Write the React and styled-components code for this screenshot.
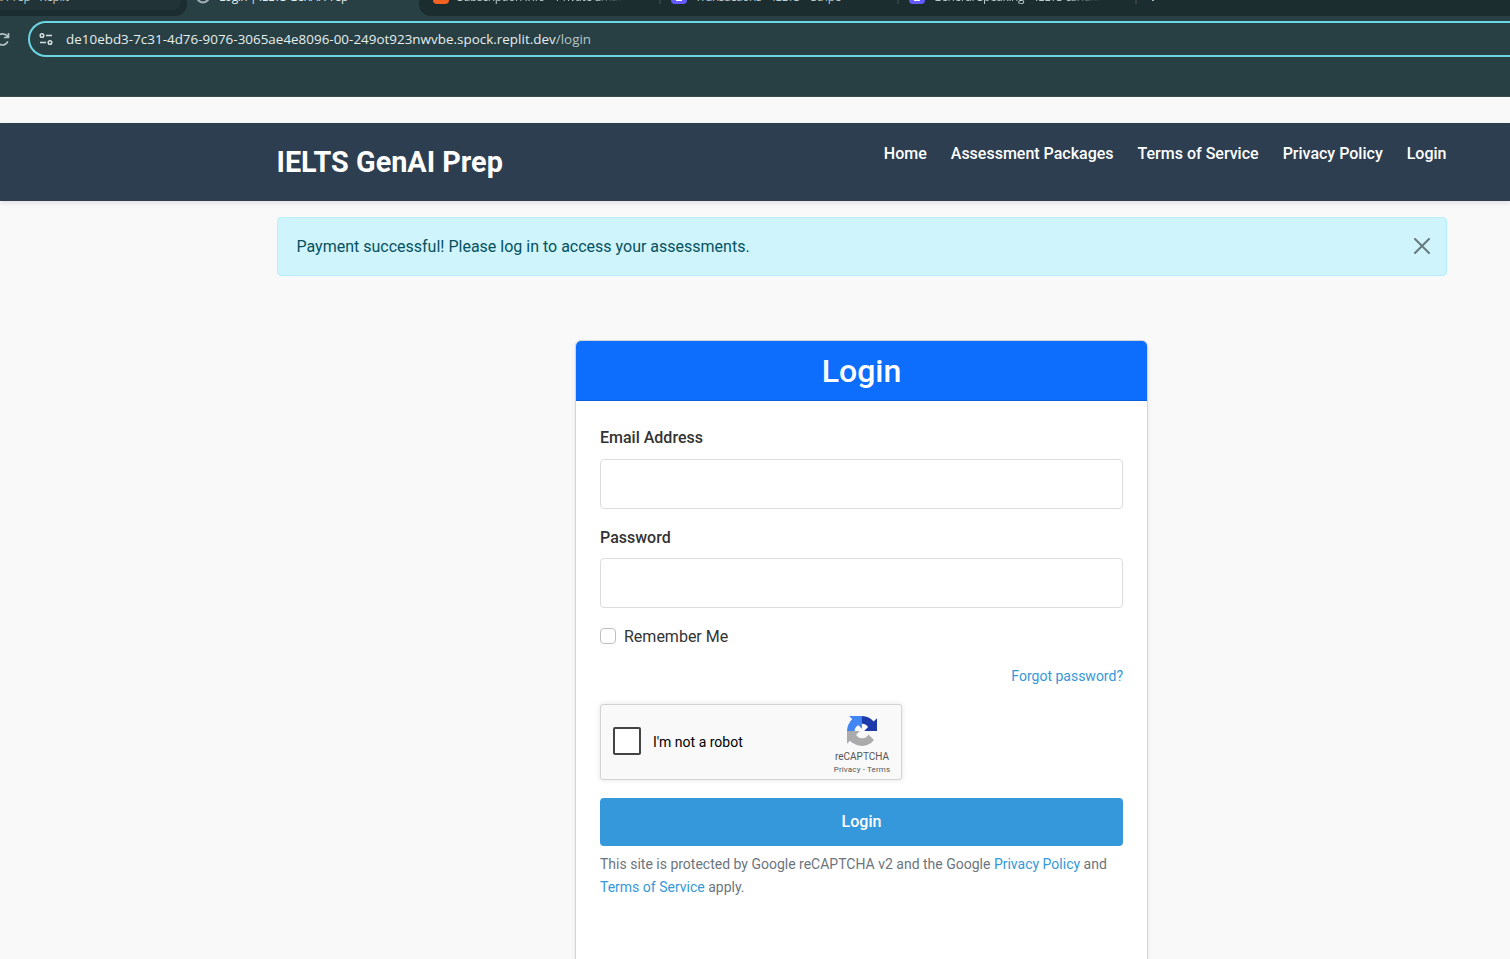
import React from 'react';
import styled, { createGlobalStyle } from 'styled-components';

const Global = createGlobalStyle`
  * { box-sizing: border-box; }
  html, body { margin: 0; height: 959px; overflow: hidden; }
  body { background: #f9f9f9; color: #333; font: 400 16px/25.6px Roboto, sans-serif; }
`;

const Page = styled.div`
  height: 959px;
  overflow: hidden;
`;

const Browser = styled.div`
  height: 97px;
  background: #283f43;
  border-bottom: 1px solid #3b4b4f;
  overflow: hidden;
`;

const TabStrip = styled.div`
  display: flex;
  height: 16px;
  background: #283f43;
`;

const TabGroup = styled.div`
  display: flex;
  width: ${(p) => p.$width}px;
  flex: ${(p) => (p.$grow ? '1 0 0' : 'none')};
  padding-left: ${(p) => p.$pad || 0}px;
  background: ${(p) => (p.$active ? 'transparent' : '#1c2d30')};
  border-radius: ${(p) => p.$radius || 0};
`;

const HoveredTab = styled.div`
  display: flex;
  justify-content: flex-end;
  width: 181px;
  height: 10px;
  padding-right: 112.5px;
  background: #213336;
  border-radius: 0 0 8px 0;
`;

const TabTitle = styled.span`
  display: block;
  width: ${(p) => p.$width || 'auto'};
  margin-top: -11px;
  margin-left: ${(p) => p.$left || 0}px;
  height: 20px;
  flex: none;
  font: 400 12px/16px 'Open Sans', sans-serif;
  letter-spacing: -0.42px;
  white-space: pre;
  overflow: hidden;
  color: ${(p) => (p.$active ? '#e3ecec' : '#bccbcb')};
  ${(p) => p.$fade && 'mask-image: linear-gradient(90deg, #000 80%, transparent);'}
`;

const Favicon = styled.span`
  flex: none;
  width: 16px;
  height: 4px;
  background: ${(p) => p.$color};
  border-radius: 0 0 4px 4px;
  display: flex;
  justify-content: center;

  &::after {
    content: '';
    width: 6px;
    height: 1px;
    background: ${(p) => (p.$mark ? '#fff' : 'transparent')};
  }
`;

const GlobeFavicon = styled.svg`
  flex: none;
  width: 14px;
  height: 4px;
  margin-left: 9px;
`;

const Divider = styled.span`
  flex: none;
  width: 2px;
  height: 4px;
  margin-left: ${(p) => p.$left}px;
  margin-right: ${(p) => p.$right || 0}px;
  background: #36403f;
`;

const NewTab = styled.span`
  width: 2px;
  height: 1px;
  margin-left: 15px;
  background: #a9bcbc;
`;

const AddressRow = styled.div`
  display: flex;
  padding-top: 5px;
`;

const Reload = styled.svg`
  flex: none;
  width: 18px;
  height: 18px;
  margin: 9px 17px 0 -7px;
`;

const AddressBar = styled.div`
  display: flex;
  align-items: center;
  flex: 1;
  height: 36px;
  padding-left: 9px;
  border: 2px solid #6bd5e1;
  border-right: 0;
  border-radius: 18px 0 0 18px;
  font: 400 13.4px/20px 'Open Sans', sans-serif;
  letter-spacing: 0.027px;
  color: #e6eeee;
  white-space: nowrap;
`;

const SiteControls = styled.svg`
  width: 14px;
  height: 14px;
  margin-right: 13px;
`;

const UrlPath = styled.span`
  color: #b6c5c6;
`;

const Header = styled.header`
  height: 78px;
  margin-top: 26px;
  background: #2c3e50;
  box-shadow: 0 2px 5px rgba(0, 0, 0, 0.1);
`;

const Container = styled.div`
  width: 1170px;
  margin-left: 277px;
`;

const HeaderRow = styled(Container)`
  display: flex;
  justify-content: space-between;
  margin-left: 276.5px;
  padding-top: 16px;
`;

const Brand = styled.h1`
  margin: 0;
  font-size: 28.8px;
  line-height: 46px;
  font-weight: 700;
  color: #fff;
`;

const Nav = styled.nav`
  display: flex;
  gap: 24px;
  padding-top: 2px;
`;

const NavLink = styled.a`
  color: #fff;
  font-weight: 500;
`;

const Alert = styled.div`
  display: flex;
  align-items: center;
  justify-content: space-between;
  height: 59px;
  margin-top: 16px;
  padding: 0 16px 0 18.5px;
  border: 1px solid #b6effb;
  border-radius: 4px;
  background: #cff4fc;
  color: #055160;
`;

const CloseIcon = styled.svg`
  width: 16px;
  height: 16px;
  margin-bottom: 1px;
  opacity: 0.5;
`;

const Card = styled.main`
  width: 573px;
  height: 700px;
  margin: 64px 0 0 298px;
  border: 1px solid #d3d4d5;
  border-radius: 6px;
  background: #fff;
  box-shadow: 0 2px 4px rgba(0, 0, 0, 0.075);
`;

const CardTitle = styled.h2`
  height: 60px;
  margin: 0;
  border-bottom: 1px solid #0b5ed7;
  border-radius: 5px 5px 0 0;
  background: #0d6efd;
  color: #fff;
  font-size: 32px;
  font-weight: 500;
  line-height: 60px;
  text-align: center;
`;

const Form = styled.form`
  padding: 24px 24px 0;
`;

const Field = styled.label`
  display: block;
  margin-bottom: 16px;
  font-weight: 500;
`;

const Input = styled.input`
  display: block;
  width: 100%;
  height: 50px;
  margin-top: 8px;
  border: 1px solid #ddd;
  border-radius: 4px;
  background: #fff;
`;

const Remember = styled.label`
  display: flex;
  align-items: center;
  gap: 8px;
  margin-bottom: 15.2px;
`;

const Checkbox = styled.span`
  width: 16px;
  height: 16px;
  margin-top: -1px;
  border: 1px solid #bfbfbf;
  border-radius: 4px;
`;

const Forgot = styled.div`
  font-size: 14px;
  line-height: 22.4px;
  text-align: right;
`;

const Link = styled.a`
  color: #3498db;
`;

const Captcha = styled.div`
  display: flex;
  align-items: center;
  width: 302px;
  height: 76px;
  margin-top: 17px;
  padding: 0 10px 0 12px;
  border: 1px solid #d3d3d3;
  border-radius: 3px;
  background: #f9f9f9;
  box-shadow: 0 0 4px 1px rgba(0, 0, 0, 0.08);
  color: #000;
  font-size: 14px;
`;

const CaptchaBox = styled.span`
  width: 28px;
  height: 28px;
  margin: -2px 12px 0 0;
  border: 2px solid #444;
  border-radius: 2px;
  background: #fff;
`;

const CaptchaBadge = styled.div`
  display: flex;
  flex-direction: column;
  align-items: center;
  width: 58px;
  margin-left: auto;
  padding-top: 6px;
  color: #555;
  white-space: nowrap;
`;

const CaptchaLogo = styled.svg`
  width: 30px;
  height: 30px;
  margin-top: 1px;
`;

const CaptchaName = styled.span`
  margin-top: 5px;
  font-size: 10px;
  line-height: 12px;
`;

const CaptchaTerms = styled.span`
  margin-top: 2px;
  font-size: 8px;
  line-height: 10px;
  letter-spacing: 0.15px;
`;

const Submit = styled.button`
  display: block;
  width: 100%;
  height: 48px;
  margin-top: 18px;
  border: 0;
  border-radius: 4px;
  background: #3498db;
  color: #fff;
  font: 500 16px/24px Roboto, sans-serif;
`;

const Notice = styled.p`
  margin: 7px 0 0;
  font-size: 14px;
  line-height: 22.8px;
  color: #6c757d;
`;

const navItems = ['Home', 'Assessment Packages', 'Terms of Service', 'Privacy Policy', 'Login'];

function BrowserChrome() {
  return (
    <Browser>
      <TabStrip>
        <TabGroup $width={187} $radius="0 0 12px 0">
          <HoveredTab>
            <TabTitle>GenAI Prep - Replit</TabTitle>
          </HoveredTab>
        </TabGroup>
        <TabGroup $width={232} $active>
          <GlobeFavicon viewBox="0 0 14 4">
            <circle cx="7" cy="-3.5" r="6" fill="none" stroke="#a2aeb4" strokeWidth="2" />
          </GlobeFavicon>
          <TabTitle $left={9} $active>Login | IELTS GenAI Prep</TabTitle>
        </TabGroup>
        <TabGroup $grow $pad={14} $radius="0 0 0 12px">
          <Favicon $color="#f26322" />
          <TabTitle $left={8} $width="167px" $fade>Subscription Info – Private Email</TabTitle>
          <Divider $left={35} $right={10} />
          <Favicon $color="#635bff" $mark />
          <TabTitle $left={8} $width="160px">Transactions – IELTS – Stripe</TabTitle>
          <Divider $left={42} $right={10} />
          <Favicon $color="#635bff" $mark />
          <TabTitle $left={8} $width="168px" $fade>General Speaking – IELTS candidate</TabTitle>
          <Divider $left={34} />
          <NewTab />
        </TabGroup>
      </TabStrip>
      <AddressRow>
        <Reload viewBox="0 0 18 18" fill="none" stroke="#b5c3c5" strokeWidth="1.7">
          <path d="M14.8 11.4A5.6 5.6 0 1 1 13.3 5.2L15.2 7.2M15.5 3v4.5H11" />
        </Reload>
        <AddressBar>
          <SiteControls viewBox="0 0 14 14" fill="none" stroke="#d5e0e0" strokeWidth="1.5">
            <circle cx="3" cy="3.5" r="1.8" />
            <path d="M7 3.5h6M1 10.5h6" />
            <circle cx="11" cy="10.5" r="1.8" />
          </SiteControls>
          <span>
            de10ebd3-7c31-4d76-9076-3065ae4e8096-00-249ot923nwvbe.spock.replit.dev
            <UrlPath>/login</UrlPath>
          </span>
        </AddressBar>
      </AddressRow>
    </Browser>
  );
}

function RecaptchaWidget() {
  return (
    <Captcha>
      <CaptchaBox />
      I'm not a robot
      <CaptchaBadge>
        <CaptchaLogo viewBox="0 0 64 64">
          <path fill="#1c3aa9" d="M64 31.955l-.033-1.37V4.687l-7.16 7.16C50.948 4.674 42.033.093 32.05.093c-10.389 0-19.622 4.96-25.458 12.64l11.736 11.86a15.55 15.55 0 0 1 4.754-5.334c2.05-1.6 4.952-2.906 8.968-2.906.485 0 .86.057 1.135.163 4.976.393 9.288 3.14 11.828 7.124l-8.307 8.307L64 31.953" />
          <path fill="#4285f4" d="M31.862.094l-1.37.033H4.594l7.16 7.16C4.58 13.147 0 22.06 0 32.046c0 10.388 4.96 19.622 12.64 25.458L24.5 45.768a15.55 15.55 0 0 1-5.334-4.754c-1.6-2.05-2.906-4.952-2.906-8.968 0-.485.057-.86.163-1.135.393-4.976 3.14-9.288 7.124-11.828l8.307 8.307L31.86.095" />
          <path fill="#ababab" d="M.001 32.045l.033 1.37v25.898l7.16-7.16c5.86 7.173 14.774 11.754 24.76 11.754 10.388 0 19.622-4.96 25.458-12.64l-11.736-11.86a15.55 15.55 0 0 1-4.754 5.334c-2.05 1.6-4.952 2.906-8.968 2.906-.485 0-.86-.057-1.135-.163-4.976-.393-9.288-3.14-11.828-7.124l8.307-8.307c-10.522.04-22.4.066-27.295-.005" />
        </CaptchaLogo>
        <CaptchaName>reCAPTCHA</CaptchaName>
        <CaptchaTerms>Privacy - Terms</CaptchaTerms>
      </CaptchaBadge>
    </Captcha>
  );
}

export default function App() {
  return (
    <Page>
      <Global />
      <BrowserChrome />
      <Header>
        <HeaderRow>
          <Brand>IELTS GenAI Prep</Brand>
          <Nav>
            {navItems.map((item) => (
              <NavLink key={item}>{item}</NavLink>
            ))}
          </Nav>
        </HeaderRow>
      </Header>
      <Container>
        <Alert>
          Payment successful! Please log in to access your assessments.
          <CloseIcon viewBox="0 0 16 16">
            <path d="M1 1l14 14M15 1L1 15" stroke="#000" strokeWidth="2" strokeLinecap="round" />
          </CloseIcon>
        </Alert>
        <Card>
          <CardTitle>Login</CardTitle>
          <Form>
            <Field>
              Email Address
              <Input type="email" />
            </Field>
            <Field>
              Password
              <Input type="password" />
            </Field>
            <Remember>
              <Checkbox />
              Remember Me
            </Remember>
            <Forgot>
              <Link>Forgot password?</Link>
            </Forgot>
            <RecaptchaWidget />
            <Submit type="button">Login</Submit>
            <Notice>
              This site is protected by Google reCAPTCHA v2 and the Google <Link>Privacy Policy</Link> and{' '}
              <Link>Terms of Service</Link> apply.
            </Notice>
          </Form>
        </Card>
      </Container>
    </Page>
  );
}
